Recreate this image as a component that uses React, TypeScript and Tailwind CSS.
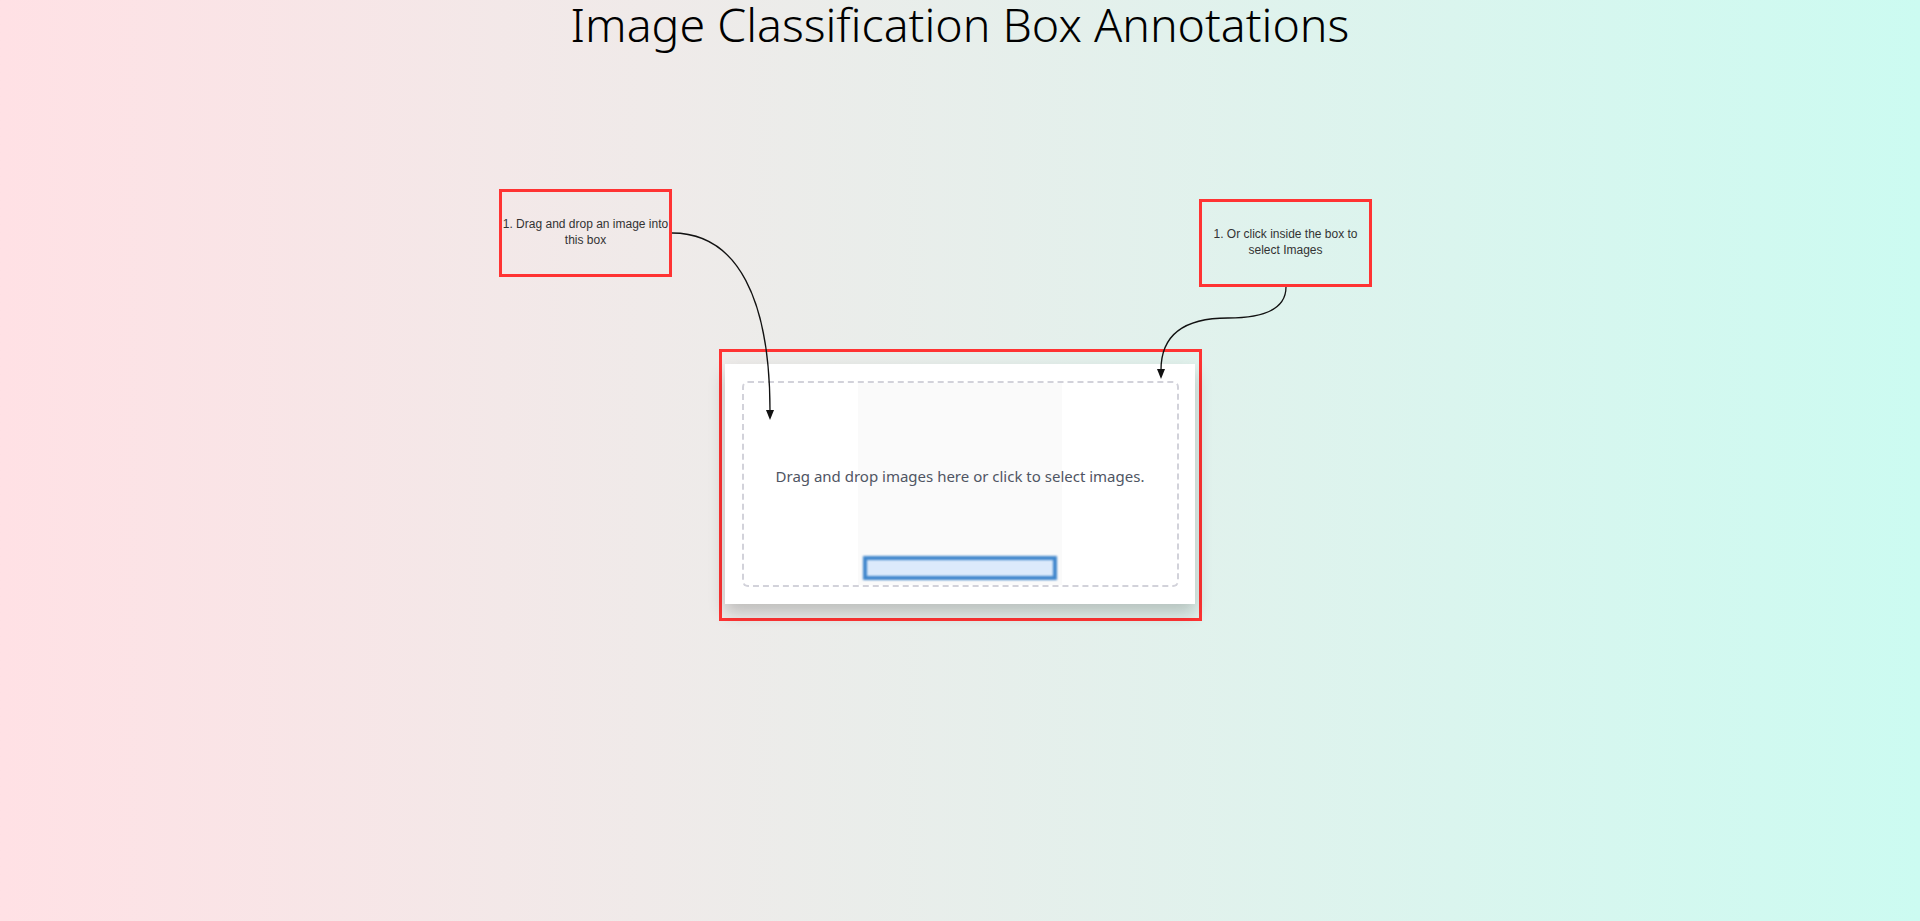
import React from "react";

export default function App() {
  return (
    <div className="relative min-h-screen w-full overflow-hidden bg-linear-to-r from-[#ffe1e5] to-[#ccfbf1]">
      <h1 className="m-0 pt-[2px] text-center text-[46.5px] leading-[44px] font-light text-black [font-family:'Noto_Sans',sans-serif]">
        Image Classification Box Annotations
      </h1>

      <div className="mt-[303px] flex justify-center">
        <div className="border-[3px] border-[#ff3333] pt-[12px] pl-[3px] pr-[4px] pb-[14px]">
          <div className="w-[470px] h-[240px] bg-white pt-[17px] pl-[17px] shadow-[0_9px_16px_rgba(0,0,0,0.2)]">
            <div className="grid w-[437px] h-[206px] rounded-[6px] border-2 border-dashed border-[#d2d2da]">
              <div className="[grid-area:1/1] flex justify-center">
                <div className="flex w-[204px] flex-col justify-end bg-[#fafafa] pb-[5px]">
                  <div className="mx-auto h-[24px] w-[194px] border-[4px] border-[#3f86cc] bg-[#dceafb] blur-[1.2px]" />
                </div>
              </div>
              <div className="[grid-area:1/1] flex items-center justify-center pb-[16px]">
                <p className="text-[15px] text-[#4f5563] [font-family:'Noto_Sans',sans-serif]">
                  Drag and drop images here or click to select images.
                </p>
              </div>
            </div>
          </div>
        </div>
      </div>

      {/* annotation nodes on the free canvas */}
      <div className="absolute left-[499px] top-[189px] flex h-[88px] w-[173px] items-center justify-center border-[3px] border-[#ff3333] pb-[1px]">
        <p className="text-center text-[12px] leading-[15.5px] text-[#333] [font-family:'Liberation_Sans',Arial,sans-serif]">
          1. Drag and drop an image into
          <br />
          this box
        </p>
      </div>
      <div className="absolute left-[1199px] top-[199px] flex h-[88px] w-[173px] items-center justify-center border-[3px] border-[#ff3333] pb-[1px]">
        <p className="text-center text-[12px] leading-[15.5px] text-[#333] [font-family:'Liberation_Sans',Arial,sans-serif]">
          1. Or click inside the box to
          <br />
          select Images
        </p>
      </div>

      <svg
        className="pointer-events-none absolute left-0 top-0"
        width="1920"
        height="921"
        viewBox="0 0 1920 921"
      >
        <path
          d="M672 233 C 738 233, 770 300, 770 411"
          fill="none"
          stroke="#111"
          strokeWidth="1.3"
        />
        <path d="M766 410 L774 410 L770 420 Z" fill="#111" />
        <path
          d="M1286 287 C 1286 308, 1266 318, 1228 318 C 1182 318, 1161 336, 1161 370"
          fill="none"
          stroke="#111"
          strokeWidth="1.3"
        />
        <path d="M1157 369 L1165 369 L1161 379 Z" fill="#111" />
      </svg>
    </div>
  );
}
